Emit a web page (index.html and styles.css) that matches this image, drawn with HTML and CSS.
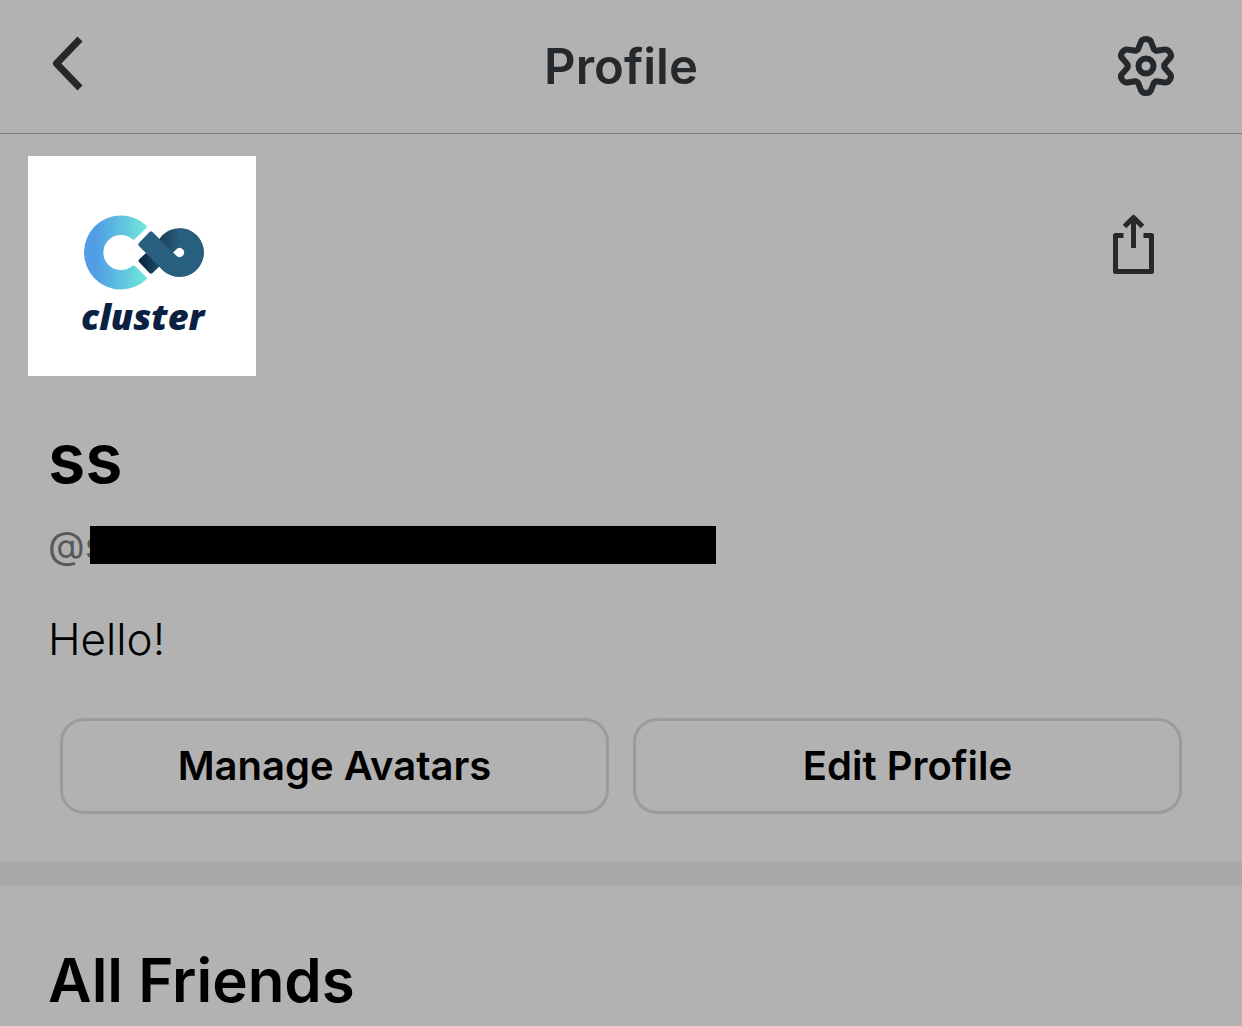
FILE: index.html
```html
<!DOCTYPE html>
<html lang="en">
<head>
<meta charset="utf-8">
<meta name="viewport" content="width=device-width, initial-scale=1">
<title>Profile</title>
<link rel="stylesheet" href="styles.css">
</head>
<body>
<header class="topbar">
  <button class="icon-button" type="button" aria-label="Back">
    <svg width="32" height="56" viewBox="0 0 32 56" fill="none" stroke="currentColor" stroke-width="7" stroke-linejoin="round"><path d="M28 3 4.500 27.500 28 52"/></svg>
  </button>
  <h1 class="title">Profile</h1>
  <button class="icon-button settings" type="button" aria-label="Settings">
    <svg width="60" height="60" viewBox="-30 -30 60 60" fill="none" stroke="currentColor" stroke-width="6" stroke-linejoin="round"><path d="M-8-16.500-5.500-23Q-4.500-27 0-27T5.500-23L8-16.500 10.300-15.200 17.200-16.300Q21.500-17.400 24-13.500T22.700-6.700L18.300-1.300V1.300L22.700 6.700Q26.400 9.600 24 13.500T17.200 16.300L10.300 15.200 8 16.500 5.500 23Q4.500 27 0 27T-5.500 23L-8 16.500-10.300 15.200-17.200 16.300Q-21.500 17.400-24 13.500T-22.700 6.700L-18.300 1.300V-1.300L-22.700-6.700Q-26.400-9.600-24-13.500T-17.200-16.300L-10.300-15.200Z"/><circle r="7.500"/></svg>
  </button>
</header>
<main>
  <section class="profile">
    <div class="profile-top">
      <svg class="avatar" viewBox="0 0 228 220" role="img" aria-label="cluster">
        <defs>
          <linearGradient id="ring" x1="56" x2="119" y1="0" y2="0" gradientUnits="userSpaceOnUse"><stop offset=".2" stop-color="#509ee5"/><stop offset="1" stop-color="#70e8d8"/></linearGradient>
          <linearGradient id="loop" x1="133" x2="153" y1="0" y2="0" gradientUnits="userSpaceOnUse"><stop offset="0" stop-color="#1c405b"/><stop offset="1" stop-color="#285f7e"/></linearGradient>
          <linearGradient id="tail" x1="110" x2="132" y1="0" y2="0" gradientUnits="userSpaceOnUse"><stop offset=".2" stop-color="#0d2745"/><stop offset="1" stop-color="#1c4c69"/></linearGradient>
        </defs>
        <rect width="228" height="220" fill="#fff"/>
        <path fill="url(#ring)" d="M118.300 69.500Q119.500 70.700 118.300 72L107 83Q105.800 84.200 104 83A17.500 17.500 0 1 0 104 110Q105.800 108.800 107 110L118.300 121Q119.500 122.300 118.300 123.500A37 37 0 1 1 118.300 69.500Z"/>
        <path fill="url(#tail)" d="M118 97 111 103.500Q110 104.800 111 106L121.500 117Q123 118.500 124.500 117L134 108Z"/>
        <circle cx="151.500" cy="96.500" r="24.300" fill="url(#loop)"/>
        <path fill="#285f7e" d="M111 87 121.500 76Q123 74.500 124.500 76L145 96.500H151V72.200A24.300 24.300 0 1 1 134.300 113.700L111 90Q109.500 88.500 111 87Z"/>
        <path fill="#fff" d="M145 96.500 149 92.800A4.500 4.500 0 1 1 149 100.200Z"/>
        <text class="wordmark" x="53" y="174">cluster</text>
      </svg>
      <button class="icon-button share" type="button" aria-label="Share">
        <svg width="42" height="60" viewBox="0 0 42 60" fill="none" stroke="currentColor" stroke-width="5" stroke-linejoin="round"><path d="M10.500 21.500h-8v36h36v-36h-8M20.500 34V4M11.500 12.500l9-9 9 9"/></svg>
      </button>
    </div>
    <h2 class="name">ss</h2>
    <p class="handle">@s<span class="redacted"></span></p>
    <p class="bio">Hello!</p>
    <div class="actions">
      <button class="action" type="button">Manage Avatars</button>
      <button class="action" type="button">Edit Profile</button>
    </div>
  </section>
  <section class="friends">
    <h2 class="section-title">All Friends</h2>
  </section>
</main>
</body>
</html>
```
FILE: styles.css
```css
* { box-sizing: border-box; }
body {
  margin: 0;
  background: #b2b2b2;
  color: #000;
  font-family: Inter, "Liberation Sans", sans-serif;
}
h1, h2, p { margin: 0; }
svg { display: block; }
.topbar {
  display: grid;
  grid-template-columns: 1fr auto 1fr;
  align-items: center;
  height: 134px;
  padding: 0 52px;
  border-bottom: 1px solid #7b7b7b;
  color: #25292c;
}
.icon-button {
  padding: 0;
  border: 0;
  background: none;
  color: #25292c;
  justify-self: start;
}
.topbar .icon-button { margin-bottom: 6px; }
.topbar .settings { justify-self: end; margin: 0 14px 2px 0; }
.title { font-size: 49px; line-height: 62px; font-weight: 600; }
.profile { padding-bottom: 48px; border-bottom: 24px solid #a9a9a9; }
.profile-top {
  display: flex;
  justify-content: space-between;
  align-items: flex-start;
  padding: 22px 87px 0 28px;
}
.avatar { width: 228px; height: 220px; }
.wordmark {
  font: italic 800 36px "Open Sans", sans-serif;
  fill: #0a2142;
}
.share { margin-top: 58px; }
.name {
  margin: 42px 48px 0;
  font-size: 68px;
  line-height: 80px;
  font-weight: 600;
}
.handle {
  display: flex;
  align-items: center;
  margin: 22px 48px 0;
  font-size: 38px;
  line-height: 50px;
  color: #54595d;
}
.redacted {
  width: 626px;
  height: 38px;
  margin-left: -15px;
  background: #000;
}
.bio {
  margin: 42px 48px 0;
  font-size: 44px;
  line-height: 54px;
  font-weight: 300;
}
.actions {
  display: grid;
  grid-template-columns: 1fr 1fr;
  gap: 24px;
  margin: 52px 60px 0;
}
.action {
  height: 96px;
  padding: 0;
  border: 3px solid #9b9b9f;
  border-radius: 24px;
  background: none;
  color: #000;
  font: 600 40px/48px Inter, "Liberation Sans", sans-serif;
}
.friends { padding: 58px 48px 0; }
.section-title { font-size: 60px; line-height: 72px; font-weight: 600; }
```
